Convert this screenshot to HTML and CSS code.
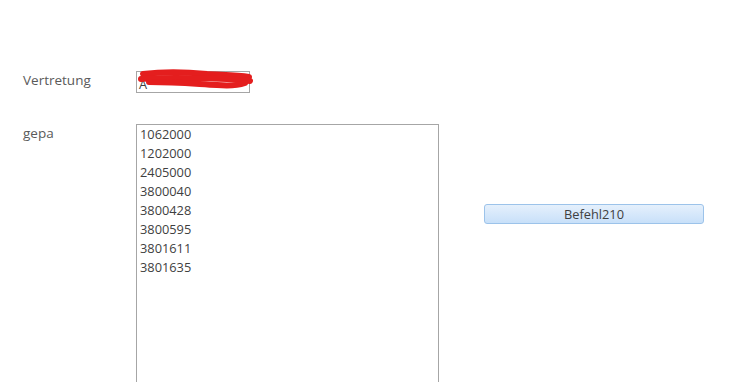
FILE: index.html
```html
<!DOCTYPE html>
<html lang="de">
<head>
  <meta charset="UTF-8">
  <title>Formular</title>
  <link rel="stylesheet" href="styles.css">
</head>
<body>
  <div class="form">
    <div class="label">Vertretung</div>
    <div class="field">
      <div class="textbox">A</div>
      <svg class="scribble" width="118" height="22" viewBox="0 0 118 22">
        <path d="M6 5 C30 2 50 3 70 5 C85 6 100 6 112 8" />
        <path d="M4 10 C30 8 60 9 90 10 C100 11 108 11 113 12" />
        <path d="M12 13 C40 13 60 15 80 16 C92 17 102 16 108 14" />
      </svg>
    </div>
    <div></div>

    <div class="label gap">gepa</div>
    <div class="gap">
      <div class="listbox">
        <div class="item">1062000</div>
        <div class="item">1202000</div>
        <div class="item">2405000</div>
        <div class="item">3800040</div>
        <div class="item">3800428</div>
        <div class="item">3800595</div>
        <div class="item">3801611</div>
        <div class="item">3801635</div>
      </div>
    </div>
    <div class="gap">
      <div class="button">Befehl210</div>
    </div>
  </div>
</body>
</html>
```

FILE: styles.css
```css
*{margin: 0;box-sizing: border-box;}
html, body{
  height: 100%;
  overflow: hidden;
}
body{
  background: #fff;
  font-family: "Open Sans", "Noto Sans", sans-serif;
  font-size: 12.8px;
}
.form{
  display: grid;
  grid-template-columns: 136px 348px 220px;
  padding-top: 71px;
}
.label{
  padding-left: 23px;
  color: #5a5a5a;
  font-size: 13.5px;
  line-height: 18px;
}
.gap{
  margin-top: 31px;
}
.field{
  position: relative;
  width: 114px;
}
.textbox{
  height: 22px;
  border: 1px solid #a6a6a6;
  padding: 3px 2px 0;
  color: #404040;
  line-height: 18px;
}
.scribble{
  position: absolute;
  left: 1px;
  top: -2px;
}
.scribble path{
  fill: none;
  stroke: #e41e1e;
  stroke-width: 6;
  stroke-linecap: round;
}
.listbox{
  width: 303px;
  height: 272px;
  border: 1px solid #a6a6a6;
  padding: 0 3px;
}
.item{
  color: #3f3f3f;
  line-height: 19px;
}
.button{
  margin-top: 80px;
  height: 20px;
  border: 1px solid #9cc3ea;
  border-radius: 3px;
  background: linear-gradient(#e5f0fc, #c8e0f9);
  color: #404040;
  text-align: center;
  line-height: 18px;
}
```
